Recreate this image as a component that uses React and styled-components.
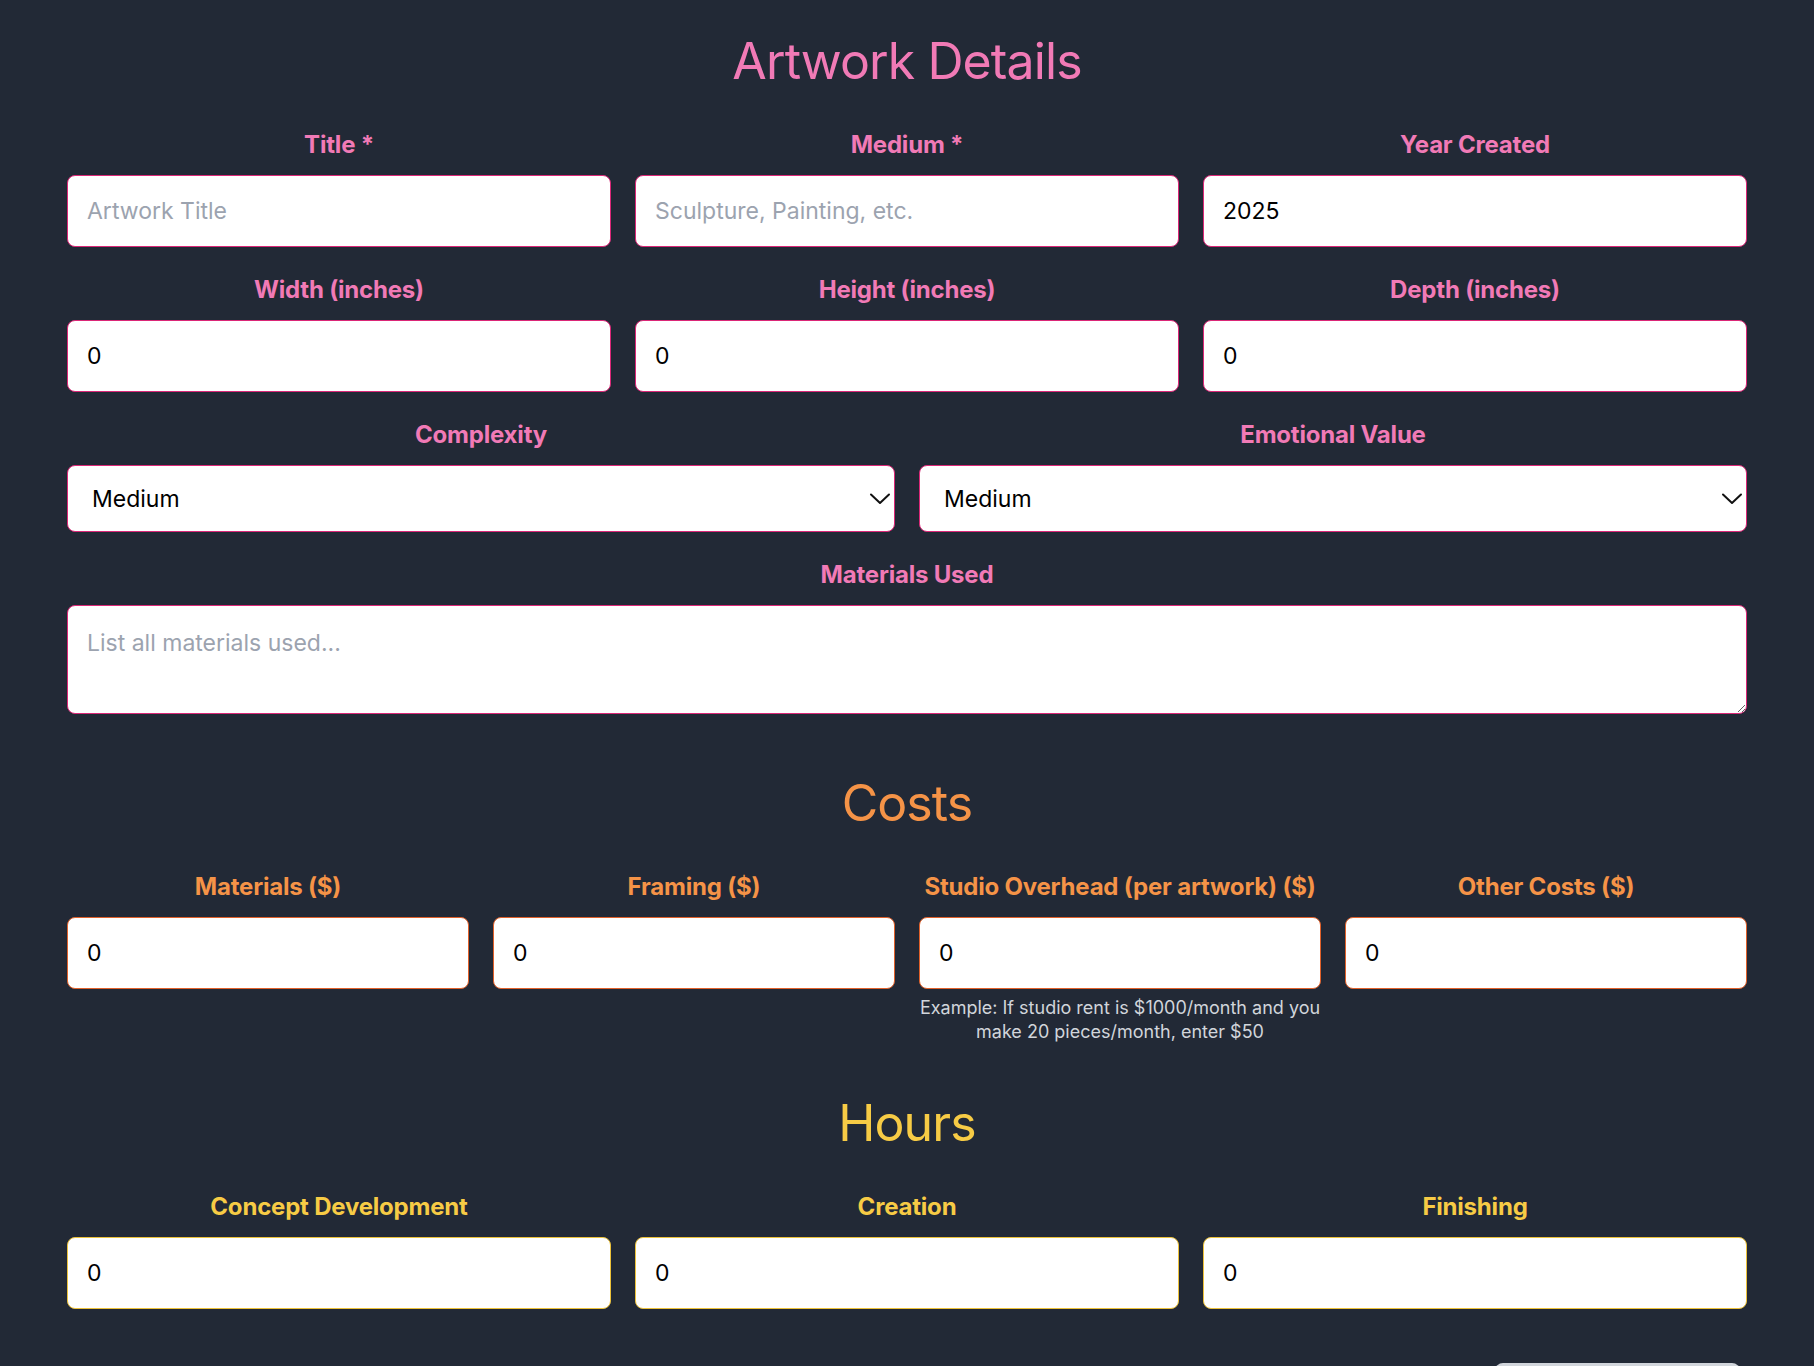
import React from 'react';
import styled, { createGlobalStyle } from 'styled-components';

const GlobalStyle = createGlobalStyle`
  html, body { margin: 0; padding: 0; background: #222936; }
  body { font-family: Inter, "Noto Sans", Roboto, sans-serif; }
  * { box-sizing: border-box; }
`;

const tones = {
  pink: { text: '#f17ab6', border: '#db2777' },
  orange: { text: '#f59347', border: '#e0602a' },
  yellow: { text: '#f7cb45', border: '#ecc13a' },
};

const Page = styled.main`
  width: 1680px;
  margin: 0 auto;
  padding-top: 31px;
`;

const Section = styled.section`
  margin-bottom: ${(p) => p.$after}px;
`;

const Heading = styled.h2`
  margin: 0 0 38px;
  font-size: 50px;
  line-height: 60px;
  font-weight: 400;
  text-align: center;
  letter-spacing: -0.9px;
  color: ${(p) => tones[p.$tone].text};
`;

const Grid = styled.div`
  display: grid;
  grid-template-columns: repeat(${(p) => p.$cols}, 1fr);
  column-gap: 24px;
  row-gap: 27px;
  margin-bottom: 27px;
  &:last-child { margin-bottom: 0; }
`;

const Field = styled.div`
  display: flex;
  flex-direction: column;
  min-width: 0;
`;

const Label = styled.label`
  display: block;
  margin-bottom: 14px;
  font-size: 24px;
  line-height: 32px;
  font-weight: 700;
  text-align: center;
  white-space: nowrap;
  letter-spacing: -0.2px;
  color: ${(p) => tones[p.$tone].text};
`;

const controlBase = `
  width: 100%;
  background: #ffffff;
  border-radius: 8px;
  font-family: Inter, "Noto Sans", sans-serif;
  font-size: 23px;
  color: #000000;
  outline: none;
  &::placeholder { color: #9ca3af; }
`;

const Input = styled.input`
  ${controlBase}
  display: block;
  height: 72px;
  padding: 0 19px;
  border: 1px solid ${(p) => tones[p.$tone].border};
`;

const SelectWrap = styled.div`
  position: relative;
`;

const Select = styled.select`
  ${controlBase}
  display: block;
  height: 67px;
  padding: 0 50px 0 24px;
  appearance: none;
  -webkit-appearance: none;
  border: 1px solid ${(p) => tones[p.$tone].border};
`;

const Chevron = styled.svg`
  position: absolute;
  right: 0;
  top: 50%;
  transform: translateY(-50%);
  pointer-events: none;
`;

const TextArea = styled.textarea`
  ${controlBase}
  display: block;
  height: 109px;
  padding: 21px 19px 18px;
  line-height: 33px;
  resize: vertical;
  border: 1px solid ${(p) => tones[p.$tone].border};
`;

const Help = styled.p`
  margin: 7px 0 0;
  padding: 0;
  font-size: 18px;
  line-height: 24px;
  text-align: center;
  color: #d1d5db;
`;

const ButtonRow = styled.div`
  display: flex;
  justify-content: flex-end;
  padding-right: 7px;
  padding-bottom: 40px;
`;

const Button = styled.button`
  width: 245px;
  height: 80px;
  border: none;
  border-radius: 8px;
  background: #d1d5db;
  color: #111827;
  font-family: Inter, "Noto Sans", sans-serif;
  font-size: 20px;
  font-weight: 600;
`;

function TextField({ tone, label, placeholder, value }) {
  return (
    <Field>
      <Label $tone={tone}>{label}</Label>
      <Input $tone={tone} placeholder={placeholder} defaultValue={value} />
    </Field>
  );
}

function SelectField({ tone, label }) {
  return (
    <Field>
      <Label $tone={tone}>{label}</Label>
      <SelectWrap>
        <Select $tone={tone} defaultValue="Medium">
          <option>Low</option>
          <option>Medium</option>
          <option>High</option>
        </Select>
        <Chevron width="30" height="20" viewBox="0 0 30 20">
          <polyline points="6,5.5 15,14 24,5.5" fill="none" stroke="#111" strokeWidth="2" strokeLinecap="round" strokeLinejoin="round" />
        </Chevron>
      </SelectWrap>
    </Field>
  );
}

export default function App() {
  return (
    <>
      <GlobalStyle />
      <Page>
        <Section $after={59}>
          <Heading $tone="pink">Artwork Details</Heading>
          <Grid $cols={3}>
            <TextField tone="pink" label="Title *" placeholder="Artwork Title" />
            <TextField tone="pink" label="Medium *" placeholder="Sculpture, Painting, etc." />
            <TextField tone="pink" label="Year Created" value="2025" />
            <TextField tone="pink" label="Width (inches)" value="0" />
            <TextField tone="pink" label="Height (inches)" value="0" />
            <TextField tone="pink" label="Depth (inches)" value="0" />
          </Grid>
          <Grid $cols={2}>
            <SelectField tone="pink" label="Complexity" />
            <SelectField tone="pink" label="Emotional Value" />
          </Grid>
          <Field>
            <Label $tone="pink">Materials Used</Label>
            <TextArea $tone="pink" placeholder="List all materials used..." />
          </Field>
        </Section>

        <Section $after={49}>
          <Heading $tone="orange">Costs</Heading>
          <Grid $cols={4}>
            <TextField tone="orange" label="Materials ($)" value="0" />
            <TextField tone="orange" label="Framing ($)" value="0" />
            <Field>
              <Label $tone="orange">Studio Overhead (per artwork) ($)</Label>
              <Input $tone="orange" defaultValue="0" />
              <Help>Example: If studio rent is $1000/month and you make 20 pieces/month, enter $50</Help>
            </Field>
            <TextField tone="orange" label="Other Costs ($)" value="0" />
          </Grid>
        </Section>

        <Section $after={54}>
          <Heading $tone="yellow">Hours</Heading>
          <Grid $cols={3}>
            <TextField tone="yellow" label="Concept Development" value="0" />
            <TextField tone="yellow" label="Creation" value="0" />
            <TextField tone="yellow" label="Finishing" value="0" />
          </Grid>
        </Section>

        <ButtonRow>
          <Button type="button">Calculate Price</Button>
        </ButtonRow>
      </Page>
    </>
  );
}
